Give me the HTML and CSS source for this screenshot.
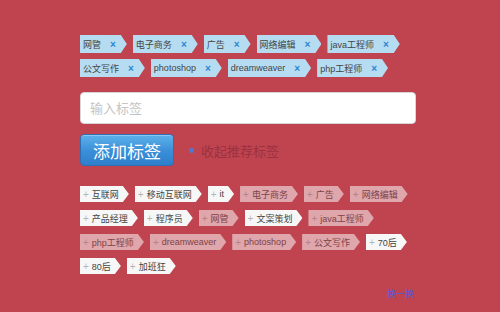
FILE: index.html
```html
<!DOCTYPE html>
<html lang="zh-CN">
<head>
    <meta charset="UTF-8">
    <title>标签</title>
    <link rel="stylesheet" href="styles.css">
</head>
<body>
    <div class="wrap">
        <ul class="tags chosen">
            <li class="tag">网管<span class="del">×</span></li>
            <li class="tag">电子商务<span class="del">×</span></li>
            <li class="tag">广告<span class="del">×</span></li>
            <li class="tag">网络编辑<span class="del">×</span></li>
            <li class="tag">java工程师<span class="del">×</span></li>
            <li class="tag">公文写作<span class="del">×</span></li>
            <li class="tag">photoshop<span class="del">×</span></li>
            <li class="tag">dreamweaver<span class="del">×</span></li>
            <li class="tag">php工程师<span class="del">×</span></li>
        </ul>

        <input type="text" class="tag-input" placeholder="输入标签">

        <div class="actions">
            <button class="btn">添加标签</button>
            <a class="toggle"><span class="dot"></span>收起推荐标签</a>
        </div>

        <ul class="tags suggest">
            <li class="tag"><span class="plus">+</span>互联网</li>
            <li class="tag"><span class="plus">+</span>移动互联网</li>
            <li class="tag"><span class="plus">+</span>it</li>
            <li class="tag added"><span class="plus">+</span>电子商务</li>
            <li class="tag added"><span class="plus">+</span>广告</li>
            <li class="tag added"><span class="plus">+</span>网络编辑</li>
            <li class="tag"><span class="plus">+</span>产品经理</li>
            <li class="tag"><span class="plus">+</span>程序员</li>
            <li class="tag added"><span class="plus">+</span>网管</li>
            <li class="tag"><span class="plus">+</span>文案策划</li>
            <li class="tag added"><span class="plus">+</span>java工程师</li>
            <li class="tag added"><span class="plus">+</span>php工程师</li>
            <li class="tag added"><span class="plus">+</span>dreamweaver</li>
            <li class="tag added"><span class="plus">+</span>photoshop</li>
            <li class="tag added"><span class="plus">+</span>公文写作</li>
            <li class="tag"><span class="plus">+</span>70后</li>
            <li class="tag"><span class="plus">+</span>80后</li>
            <li class="tag"><span class="plus">+</span>加班狂</li>
        </ul>

        <div class="more"><a>换一换</a></div>
    </div>
</body>
</html>
```

FILE: styles.css
```css
body {
    margin: 0;
    padding: 35px 0 0 80px;
    background-color: #c0444f;
    font-family: "Liberation Sans", "Noto Sans CJK SC", sans-serif;
}
.wrap {
    width: 336px;
}
.tags {
    list-style: none;
    margin: 0;
    padding: 0;
    display: flex;
    flex-wrap: wrap;
    gap: 6px 6px;
}
.tag {
    display: flex;
    align-items: center;
    font-size: 9px;
    color: #444;
    clip-path: polygon(0 0, calc(100% - 6px) 0, 100% 50%, calc(100% - 6px) 100%, 0 100%);
}
.chosen .tag {
    height: 18px;
    padding: 0 11px 0 3px;
    background-color: #b6dcf1;
}
.del {
    margin-left: 9px;
    color: #2a86d2;
    font-size: 10px;
    font-weight: bold;
}
.tag-input {
    display: block;
    box-sizing: border-box;
    width: 336px;
    height: 32px;
    margin-top: 15px;
    padding: 0 9px;
    border: 1px solid #d6d6d6;
    border-radius: 4px;
    background: #fff;
    font-family: inherit;
    font-size: 13px;
    outline: none;
}
.tag-input::placeholder {
    color: #c4c4c4;
}
.actions {
    display: flex;
    align-items: center;
    margin-top: 10px;
}
.btn {
    width: 94px;
    height: 32px;
    border: 1px solid #2d6fb6;
    border-radius: 4px;
    background: linear-gradient(#5cb1ea, #3a8ed8 55%, #2f7fcb);
    color: #fff;
    font-family: inherit;
    font-size: 17px;
    padding: 0;
    box-shadow: inset 0 1px 0 rgba(255,255,255,0.3);
}
.toggle {
    display: flex;
    align-items: center;
    margin-left: 15px;
    font-size: 13px;
    color: #9a3141;
}
.dot {
    width: 5px;
    height: 5px;
    border-radius: 50%;
    background-color: #4f78d4;
    margin-right: 7px;
}
.suggest {
    margin-top: 20px;
    gap: 8px 6px;
}
.suggest .tag {
    height: 16px;
    padding: 0 10px 0 3px;
    background-color: #f7f7f7;
}
.suggest .tag.added {
    opacity: 0.55;
}
.plus {
    color: #b5b5b5;
    font-size: 10px;
    margin-right: 3px;
}
.more {
    margin-top: 9px;
    text-align: right;
    padding-right: 2px;
}
.more a {
    font-size: 9px;
    color: #4b5fd6;
}
```
